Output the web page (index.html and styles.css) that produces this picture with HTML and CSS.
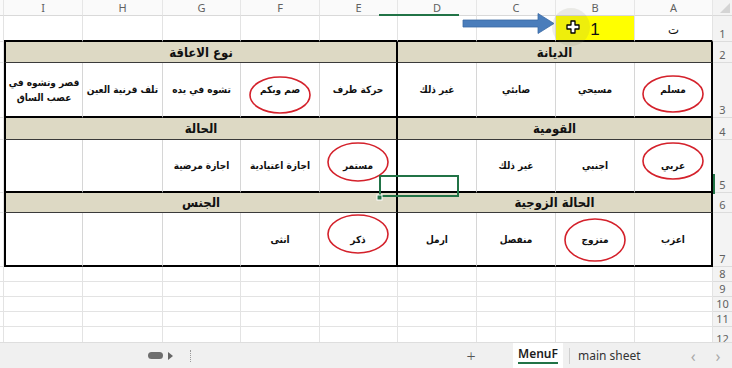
FILE: index.html
```html
<!DOCTYPE html>
<html lang="ar">
<head>
<meta charset="utf-8">
<title>MenuF</title>
<link rel="stylesheet" href="styles.css">
</head>
<body>
<div class="app">
  <div class="sheet">
    <!-- column headers -->
    <div class="ch"></div>
    <div class="ch">I</div><div class="ch">H</div><div class="ch">G</div><div class="ch">F</div><div class="ch">E</div>
    <div class="ch">D</div><div class="ch">C</div><div class="ch">B</div><div class="ch">A</div>
    <div class="ch corner"><span class="tri"></span></div>

    <!-- row 1 -->
    <div class="c j"></div>
    <div class="c top"></div><div class="c top"></div><div class="c top"></div><div class="c top"></div><div class="c top"></div>
    <div class="c top"></div><div class="c top"></div>
    <div class="c top yellow"><span class="one">1</span></div>
    <div class="c top ar ta">ت</div>
    <div class="rh">1</div>

    <!-- row 2 -->
    <div class="c j"></div>
    <div class="hd left5" dir="rtl">نوع الاعاقة</div>
    <div class="hd right4" dir="rtl">الديانة</div>
    <div class="rh">2</div>

    <!-- row 3 -->
    <div class="c j"></div>
    <div class="d first" dir="rtl">قصر وتشوه في<br>عصب الساق</div>
    <div class="d" dir="rtl">تلف قرنية العين</div>
    <div class="d" dir="rtl">تشوه في يده</div>
    <div class="d" dir="rtl">صم وبكم</div>
    <div class="d mid" dir="rtl">حركة طرف</div>
    <div class="d" dir="rtl">غير ذلك</div>
    <div class="d" dir="rtl">صابئي</div>
    <div class="d" dir="rtl">مسيحي</div>
    <div class="d last" dir="rtl">مسلم</div>
    <div class="rh">3</div>

    <!-- row 4 -->
    <div class="c j"></div>
    <div class="hd left5" dir="rtl">الحالة</div>
    <div class="hd right4" dir="rtl">القومية</div>
    <div class="rh">4</div>

    <!-- row 5 -->
    <div class="c j"></div>
    <div class="d first"></div>
    <div class="d"></div>
    <div class="d" dir="rtl">اجازة مرضية</div>
    <div class="d" dir="rtl">اجازة اعتيادية</div>
    <div class="d mid" dir="rtl">مستمر</div>
    <div class="d"></div>
    <div class="d" dir="rtl">غير ذلك</div>
    <div class="d" dir="rtl">اجنبي</div>
    <div class="d last" dir="rtl">عربي</div>
    <div class="rh sel">5</div>

    <!-- row 6 -->
    <div class="c j"></div>
    <div class="hd left5" dir="rtl">الجنس</div>
    <div class="hd right4" dir="rtl">الحالة الزوجية</div>
    <div class="rh">6</div>

    <!-- row 7 -->
    <div class="c j"></div>
    <div class="d first"></div>
    <div class="d"></div>
    <div class="d"></div>
    <div class="d" dir="rtl">انثى</div>
    <div class="d mid" dir="rtl">ذكر</div>
    <div class="d" dir="rtl">ارمل</div>
    <div class="d" dir="rtl">منفصل</div>
    <div class="d" dir="rtl">متزوج</div>
    <div class="d last" dir="rtl">اعزب</div>
    <div class="rh">7</div>

    <!-- rows 8-12 -->
    <div class="c j"></div><div class="c"></div><div class="c"></div><div class="c"></div><div class="c"></div><div class="c"></div><div class="c"></div><div class="c"></div><div class="c"></div><div class="c"></div><div class="rh">8</div>
    <div class="c j"></div><div class="c"></div><div class="c"></div><div class="c"></div><div class="c"></div><div class="c"></div><div class="c"></div><div class="c"></div><div class="c"></div><div class="c"></div><div class="rh">9</div>
    <div class="c j"></div><div class="c"></div><div class="c"></div><div class="c"></div><div class="c"></div><div class="c"></div><div class="c"></div><div class="c"></div><div class="c"></div><div class="c"></div><div class="rh">10</div>
    <div class="c j"></div><div class="c"></div><div class="c"></div><div class="c"></div><div class="c"></div><div class="c"></div><div class="c"></div><div class="c"></div><div class="c"></div><div class="c"></div><div class="rh">11</div>
    <div class="c j"></div><div class="c"></div><div class="c"></div><div class="c"></div><div class="c"></div><div class="c"></div><div class="c"></div><div class="c"></div><div class="c"></div><div class="c"></div><div class="rh">12</div>

    <!-- drawing layer over the sheet -->
    <svg class="overlay" width="732" height="342" viewBox="0 0 732 342" aria-hidden="true">
      <rect x="379" y="14" width="80" height="2" fill="#217346"/>
      <rect x="713" y="174" width="2" height="20" fill="#217346"/>
      <g fill="none" stroke="#d4212b" stroke-width="1.6">
        <ellipse cx="673" cy="94" rx="30" ry="18"/>
        <ellipse cx="280" cy="95" rx="30" ry="18"/>
        <ellipse cx="673" cy="161" rx="30" ry="18"/>
        <ellipse cx="358" cy="162" rx="30" ry="19"/>
        <ellipse cx="358" cy="234" rx="30" ry="19"/>
        <ellipse cx="595" cy="240" rx="30" ry="21"/>
      </g>
      <rect x="380" y="176" width="78" height="20" fill="none" stroke="#217346" stroke-width="2"/>
      <rect x="377" y="195" width="5" height="5" fill="#217346" stroke="#fff" stroke-width="1"/>
      <path d="M463 20 H538 V13.5 L554 23.5 L538 33.5 V27 H463 Z" fill="#4a7dbb" stroke="#3b6aa4" stroke-width="0.8"/>
      <circle cx="571" cy="27" r="19" fill="rgba(120,120,90,0.13)"/>
      <path d="M571 21 h4 v4 h4 v4 h-4 v4 h-4 v-4 h-4 v-4 h4 z" fill="#fff" stroke="#000" stroke-width="1.3" stroke-linejoin="round"/>
    </svg>
  </div>

  <div class="bar">
    <span class="thumb"></span>
    <span class="play"></span>
    <span class="dots"></span>
    <span class="plus">+</span>
    <span class="tab active"><span class="tabtext">MenuF</span></span>
    <span class="sep"></span>
    <span class="tab">main sheet</span>
    <span class="nav prev">&#8249;</span>
    <span class="nav next">&#8250;</span>
  </div>
</div>
</body>
</html>
```

FILE: styles.css
```css
html, body {
  margin: 0;
  padding: 0;
  background: #ffffff;
}

.app {
  width: 732px;
  height: 368px;
  overflow: hidden;
  display: flex;
  flex-direction: column;
  font-family: "Noto Sans", "Liberation Sans", sans-serif;
}

.sheet {
  position: relative;
  width: 732px;
  height: 342px;
  flex: none;
  overflow: hidden;
  display: grid;
  grid-template-columns: 4px 79px 80px 78px 79px 78px 79px 79px 79px 78px 19px;
  grid-template-rows: 16px 26px 21px 55px 22px 53px 20px 54px 15px 15px 15px 15px 20px;
}

.ch {
  box-sizing: border-box;
  background: #fafafa;
  border-bottom: 1px solid #d9d9d9;
  border-right: 1px solid #e6e6e6;
  color: #616161;
  font-size: 11px;
  line-height: 15px;
  text-align: center;
}

.corner {
  position: relative;
  background: #f3f3f3;
  border-right: none;
}

.tri {
  position: absolute;
  right: 2px;
  bottom: 2px;
  width: 0;
  height: 0;
  border-left: 10px solid transparent;
  border-bottom: 10px solid #d4d4d4;
}

.c {
  box-sizing: border-box;
  border-right: 1px solid #e3e3e3;
  border-bottom: 1px solid #e3e3e3;
}

.c.top {
  border-bottom: 2px solid #000;
}

.yellow {
  background: #ffff00;
  display: flex;
  align-items: center;
  justify-content: center;
}

.one {
  font-family: "Liberation Sans", sans-serif;
  font-size: 17px;
  color: #111;
  padding-top: 3px;
}

.ar {
  font-family: "DejaVu Sans Condensed", "DejaVu Sans", sans-serif;
}

.ta {
  display: flex;
  align-items: center;
  justify-content: center;
  font-size: 13px;
  color: #111;
  padding-top: 2px;
}

.rh {
  box-sizing: border-box;
  background: #f3f3f3;
  border-bottom: 1px solid #dcdcdc;
  color: #616161;
  font-size: 11px;
  line-height: 13px;
  display: flex;
  align-items: flex-end;
  justify-content: center;
  padding-bottom: 1px;
}

.hd {
  box-sizing: border-box;
  background: #ddd9c4;
  border-bottom: 1px solid #3a3a3a;
  border-right: 2px solid #000;
  display: flex;
  align-items: center;
  justify-content: center;
  font-family: "DejaVu Sans Condensed", "DejaVu Sans", sans-serif;
  font-weight: bold;
  font-size: 13px;
  color: #111;
}

.left5 {
  grid-column: span 5;
  border-left: 2px solid #000;
}

.right4 {
  grid-column: span 4;
}

.d {
  box-sizing: border-box;
  border-right: 1px solid #d6d6d6;
  border-bottom: 2px solid #000;
  display: flex;
  align-items: center;
  justify-content: center;
  text-align: center;
  white-space: nowrap;
  font-family: "DejaVu Sans Condensed", "DejaVu Sans", sans-serif;
  font-weight: bold;
  font-size: 10px;
  line-height: 15px;
  color: #111;
}

.d.first {
  border-left: 2px solid #000;
}

.d.mid,
.d.last {
  border-right: 2px solid #000;
}

.overlay {
  position: absolute;
  left: 0;
  top: 0;
  pointer-events: none;
}

.bar {
  flex: none;
  height: 26px;
  box-sizing: border-box;
  background: #f0f0f0;
  border-top: 1px solid #dedede;
  display: flex;
  align-items: center;
  font-size: 12px;
  color: #333;
}

.thumb {
  width: 15px;
  height: 7px;
  border-radius: 4px;
  background: #6e6e6e;
  margin-left: 148px;
}

.play {
  width: 0;
  height: 0;
  border-top: 4px solid transparent;
  border-bottom: 4px solid transparent;
  border-left: 5px solid #666;
  margin-left: 5px;
}

.dots {
  width: 0;
  height: 12px;
  border-left: 1px dotted #9a9a9a;
  margin-left: 17px;
}

.plus {
  margin-left: 275px;
  font-size: 16px;
  font-weight: 300;
  color: #555;
  width: 10px;
  text-align: center;
}

.tab {
  white-space: nowrap;
}

.tab.active {
  margin-left: 37px;
  align-self: stretch;
  background: #ffffff;
  width: 50px;
  display: flex;
  align-items: center;
  justify-content: center;
}

.tabtext {
  font-weight: 600;
  color: #1d1d1d;
  border-bottom: 2px solid #217346;
  line-height: 14px;
  padding-bottom: 1px;
}

.sep {
  width: 1px;
  height: 16px;
  background: #cfcfcf;
  margin-left: 6px;
  margin-right: 8px;
}

.nav {
  color: #a8a8a8;
  font-size: 16px;
}

.prev {
  margin-left: 50px;
}

.next {
  margin-left: 20px;
}
```
